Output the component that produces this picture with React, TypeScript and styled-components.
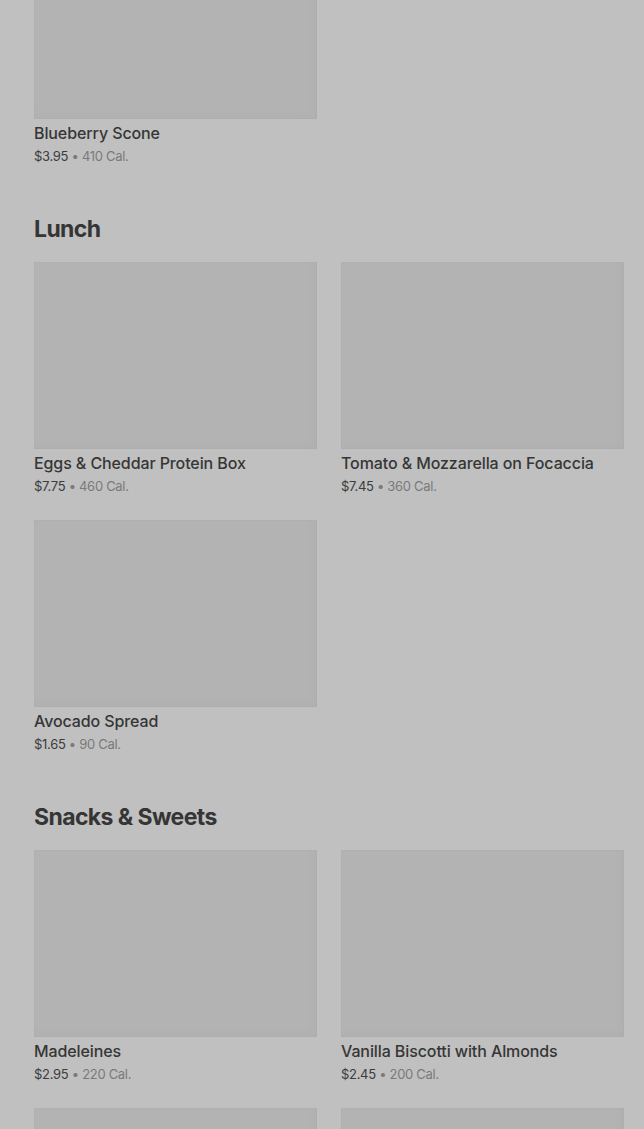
import React from 'react';
import styled, { createGlobalStyle } from 'styled-components';

const GlobalStyle = createGlobalStyle`
  html, body {
    margin: 0;
    padding: 0;
    background: #c0c0c0;
    overflow: hidden;
  }
  body {
    font-family: Inter, "Noto Sans", sans-serif;
    -webkit-font-smoothing: antialiased;
  }
`;

const Page = styled.div`
  width: 644px;
  height: 1129px;
  overflow: hidden;
  background: #c0c0c0;
`;

// page is scrolled a little, the first card's photo is cut at the top
const Scroller = styled.div`
  margin-top: -68px;
  padding: 0 20px 0 34px;
  display: flex;
  flex-direction: column;
  gap: 47px;
`;

const Section = styled.section`
  display: flex;
  flex-direction: column;
`;

const SectionTitle = styled.h2`
  margin: 0 0 17px;
  font-size: 23px;
  line-height: 32px;
  font-weight: 700;
  letter-spacing: -0.6px;
  color: #353535;
`;

const Grid = styled.div`
  display: grid;
  grid-template-columns: 283px 283px;
  column-gap: 24px;
  row-gap: 24px;
`;

const Card = styled.div`
  display: flex;
  flex-direction: column;
`;

const Thumb = styled.div`
  height: 187px;
  background: #b3b3b3;
  box-shadow: inset 0 0 0 1px rgba(0, 0, 0, 0.015), inset -12px -12px 14px -10px rgba(0, 0, 0, 0.02);
`;

const Name = styled.div`
  margin-top: 2px;
  font-size: 16px;
  line-height: 24px;
  font-weight: 500;
  letter-spacing: -0.1px;
  color: #363636;
  white-space: nowrap;
`;

const Meta = styled.div`
  margin-top: 1px;
  font-size: 13px;
  line-height: 20px;
  letter-spacing: -0.3px;
  color: #7a7a7a;
`;

const Price = styled.span`
  color: #3c3c3c;
`;

type Item = { name: string; price: string; cal: number };

const sections: { title?: string; items: Item[] }[] = [
  { items: [{ name: 'Blueberry Scone', price: '$3.95', cal: 410 }] },
  {
    title: 'Lunch',
    items: [
      { name: 'Eggs & Cheddar Protein Box', price: '$7.75', cal: 460 },
      { name: 'Tomato & Mozzarella on Focaccia', price: '$7.45', cal: 360 },
      { name: 'Avocado Spread', price: '$1.65', cal: 90 },
    ],
  },
  {
    title: 'Snacks & Sweets',
    items: [
      { name: 'Madeleines', price: '$2.95', cal: 220 },
      { name: 'Vanilla Biscotti with Almonds', price: '$2.45', cal: 200 },
      { name: 'Chocolate Chip Cookie', price: '$2.45', cal: 370 },
      { name: 'Marshmallow Dream Bar', price: '$2.25', cal: 210 },
    ],
  },
];

const MenuCard: React.FC<{ item: Item }> = ({ item }) => (
  <Card>
    <Thumb />
    <Name>{item.name}</Name>
    <Meta>
      <Price>{item.price}</Price> • {item.cal} Cal.
    </Meta>
  </Card>
);

export default function App() {
  return (
    <>
      <GlobalStyle />
      <Page>
        <Scroller>
          {sections.map((s, i) => (
            <Section key={i}>
              {s.title && <SectionTitle>{s.title}</SectionTitle>}
              <Grid>
                {s.items.map(item => (
                  <MenuCard key={item.name} item={item} />
                ))}
              </Grid>
            </Section>
          ))}
        </Scroller>
      </Page>
    </>
  );
}
